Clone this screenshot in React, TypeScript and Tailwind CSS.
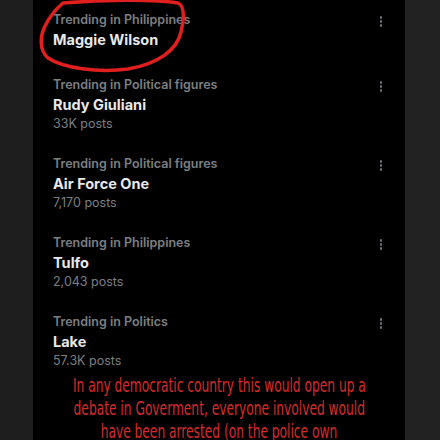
const trends = [
  { label: "Trending in Philippines", title: "Maggie Wilson", posts: "" },
  { label: "Trending in Political figures", title: "Rudy Giuliani", posts: "33K posts" },
  { label: "Trending in Political figures", title: "Air Force One", posts: "7,170 posts" },
  { label: "Trending in Philippines", title: "Tulfo", posts: "2,043 posts" },
  { label: "Trending in Politics", title: "Lake", posts: "57.3K posts" },
]

function Dots() {
  return (
    <div className="flex flex-col gap-[1.5px] pt-[4px]">
      <span className="w-[2.5px] h-[2.5px] rounded-full bg-[#6e7276]"></span>
      <span className="w-[2.5px] h-[2.5px] rounded-full bg-[#6e7276]"></span>
      <span className="w-[2.5px] h-[2.5px] rounded-full bg-[#6e7276]"></span>
    </div>
  )
}

function TrendItem({ label, title, posts }: { label: string; title: string; posts: string }) {
  return (
    <div className={"flex justify-between pl-[20px] pr-[23px] pt-[12px] " + (posts ? "pb-[12px]" : "pb-[15px]")}>
      <div className="flex flex-col">
        <span className="text-[12.5px] leading-[16px] font-semibold text-[#7c7f82]">{label}</span>
        <span className="mt-[2px] text-[14.5px] leading-[20px] font-bold text-[#e8e9ea]">{title}</span>
        {posts && <span className="text-[12.5px] leading-[17px] text-[#7c7f82]">{posts}</span>}
      </div>
      <Dots />
    </div>
  )
}

export default function App() {
  return (
    <div className="w-[440px] h-[440px] overflow-hidden flex bg-[#202020]" style={{ fontFamily: "Inter, 'Noto Sans', sans-serif" }}>
      <div className="w-[33px] bg-[#1e1e1e]"></div>
      <div className="relative w-[372px] bg-black flex flex-col">
        <div>
          {trends.map((t, i) => (
            <TrendItem key={i} {...t} />
          ))}
        </div>
        <div className="mt-[-7px] flex flex-col items-center text-[#d52b2b] text-[20px] leading-[23px]" style={{ fontFamily: "'DejaVu Sans Condensed', 'DejaVu Sans', sans-serif", fontStretch: "condensed" }}>
          <span className="inline-block whitespace-nowrap scale-x-[0.68]">In any democratic country this would open up a</span>
          <span className="inline-block whitespace-nowrap scale-x-[0.68]">debate in Goverment, everyone involved would</span>
          <span className="inline-block whitespace-nowrap scale-x-[0.68]">have been arrested (on the police own</span>
        </div>
        <svg className="absolute left-0 top-0" width="170" height="80" viewBox="0 0 170 80" fill="none">
          <path
            d="M30 3 C 70 0, 120 -1, 145 3 C 152 6, 151 20, 148 32 C 144 50, 125 64, 95 69 C 65 73, 30 68, 15 58 C 6 50, 7 36, 12 26 C 17 16, 24 8, 30 3"
            stroke="#e11f1f"
            strokeWidth="3.5"
            strokeLinecap="round"
          />
        </svg>
      </div>
      <div className="flex-1 bg-[#222222]"></div>
    </div>
  )
}
